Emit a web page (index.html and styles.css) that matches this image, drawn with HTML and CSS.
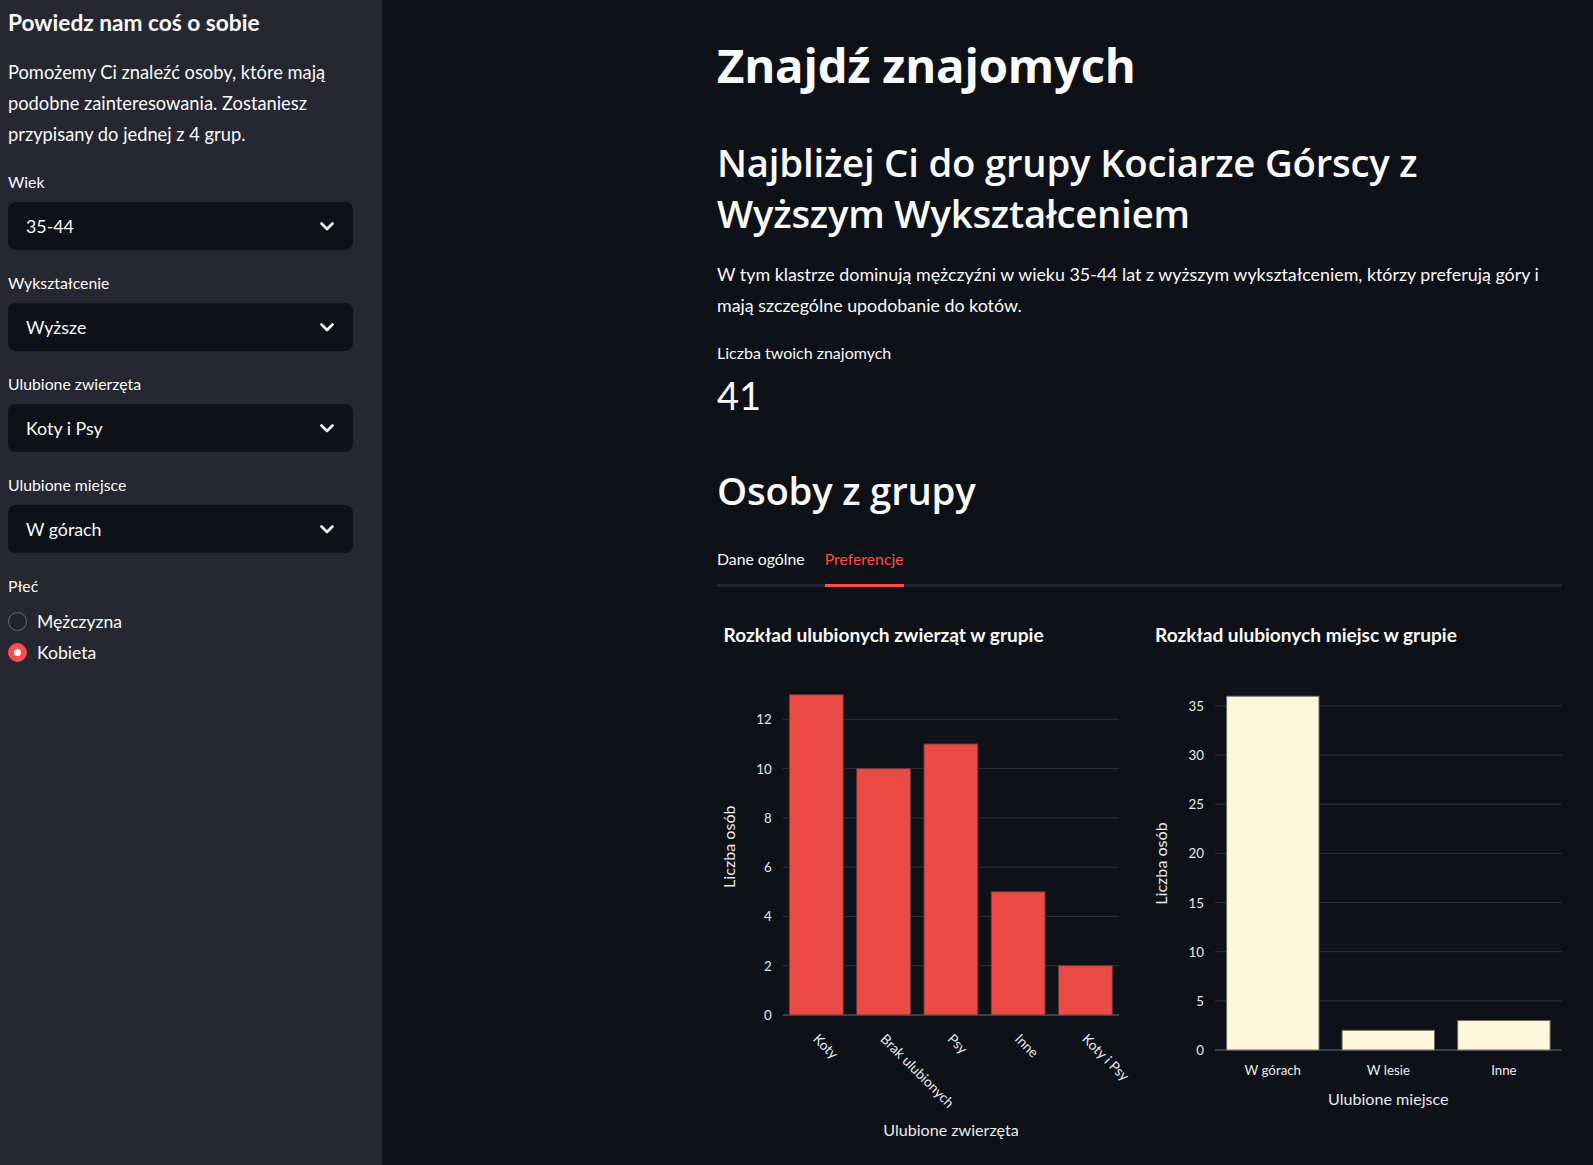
FILE: index.html
```html
<!DOCTYPE html>
<html lang="pl">
<head>
<meta charset="utf-8">
<title>Znajdź znajomych</title>
<link rel="stylesheet" href="styles.css">
</head>
<body>
<div class="app">
  <aside class="sidebar">
    <h2 class="side-title">Powiedz nam coś o sobie</h2>
    <p class="side-text">Pomożemy Ci znaleźć osoby, które mają podobne zainteresowania. Zostaniesz przypisany do jednej z 4 grup.</p>

    <div class="field">
      <div class="label">Wiek</div>
      <div class="select"><span>35-44</span><svg class="chev" width="14" height="9" viewBox="0 0 14 9"><polyline points="1.5,1.5 7,7 12.5,1.5" fill="none" stroke="#fafafa" stroke-width="2.6" stroke-linecap="round" stroke-linejoin="round"/></svg></div>
    </div>
    <div class="field">
      <div class="label">Wykształcenie</div>
      <div class="select"><span>Wyższe</span><svg class="chev" width="14" height="9" viewBox="0 0 14 9"><polyline points="1.5,1.5 7,7 12.5,1.5" fill="none" stroke="#fafafa" stroke-width="2.6" stroke-linecap="round" stroke-linejoin="round"/></svg></div>
    </div>
    <div class="field">
      <div class="label">Ulubione zwierzęta</div>
      <div class="select"><span>Koty i Psy</span><svg class="chev" width="14" height="9" viewBox="0 0 14 9"><polyline points="1.5,1.5 7,7 12.5,1.5" fill="none" stroke="#fafafa" stroke-width="2.6" stroke-linecap="round" stroke-linejoin="round"/></svg></div>
    </div>
    <div class="field">
      <div class="label">Ulubione miejsce</div>
      <div class="select"><span>W górach</span><svg class="chev" width="14" height="9" viewBox="0 0 14 9"><polyline points="1.5,1.5 7,7 12.5,1.5" fill="none" stroke="#fafafa" stroke-width="2.6" stroke-linecap="round" stroke-linejoin="round"/></svg></div>
    </div>
    <div class="field">
      <div class="label">Płeć</div>
      <div class="radios">
        <div class="radio"><span class="dot"></span><span>Mężczyzna</span></div>
        <div class="radio"><span class="dot on"></span><span>Kobieta</span></div>
      </div>
    </div>
  </aside>

  <main class="main">
    <h1 class="h1">Znajdź znajomych</h1>
    <h2 class="h2 group-title">Najbliżej Ci do grupy Kociarze Górscy z Wyższym Wykształceniem</h2>
    <p class="desc">W tym klastrze dominują mężczyźni w wieku 35-44 lat z wyższym wykształceniem, którzy preferują góry i mają szczególne upodobanie do kotów.</p>
    <div class="metric">
      <div class="metric-label">Liczba twoich znajomych</div>
      <div class="metric-value">41</div>
    </div>
    <h2 class="h2 people-title">Osoby z grupy</h2>
    <div class="tabs">
      <div class="tab">Dane ogólne</div>
      <div class="tab active">Preferencje</div>
    </div>
    <div class="charts">
      <div class="chart">
        <svg width="413" height="545" viewBox="0 0 413 545">
          <text class="ct" x="6.6" y="37">Rozkład ulubionych zwierząt w grupie</text>
          <g class="grid">
            <line x1="65.7" x2="402" y1="360.7" y2="360.7"/>
            <line x1="65.7" x2="402" y1="311.4" y2="311.4"/>
            <line x1="65.7" x2="402" y1="262.2" y2="262.2"/>
            <line x1="65.7" x2="402" y1="212.9" y2="212.9"/>
            <line x1="65.7" x2="402" y1="163.6" y2="163.6"/>
            <line x1="65.7" x2="402" y1="114.3" y2="114.3"/>
          </g>
          <line class="zero" x1="65.7" x2="402" y1="410" y2="410"/>
          <g class="bars-red">
            <rect x="72.4" y="89.7" width="53.8" height="320.3"/>
            <rect x="139.7" y="163.6" width="53.8" height="246.4"/>
            <rect x="207" y="139" width="53.8" height="271"/>
            <rect x="274.2" y="286.8" width="53.8" height="123.2"/>
            <rect x="341.5" y="360.7" width="53.8" height="49.3"/>
          </g>
          <g class="yt">
            <text x="54.7" y="415">0</text>
            <text x="54.7" y="365.7">2</text>
            <text x="54.7" y="316.4">4</text>
            <text x="54.7" y="267.2">6</text>
            <text x="54.7" y="217.9">8</text>
            <text x="54.7" y="168.6">10</text>
            <text x="54.7" y="119.3">12</text>
          </g>
          <g class="xt">
            <text transform="translate(98,432) rotate(45)" y="4">Koty</text>
            <text transform="translate(165.3,432) rotate(45)" y="4">Brak ulubionych</text>
            <text transform="translate(232.5,432) rotate(45)" y="4">Psy</text>
            <text transform="translate(299.8,432) rotate(45)" y="4">Inne</text>
            <text transform="translate(367,432) rotate(45)" y="4">Koty i Psy</text>
          </g>
          <text class="at" transform="translate(17.5,241.7) rotate(-90)">Liczba osób</text>
          <text class="at" x="234" y="531">Ulubione zwierzęta</text>
        </svg>
      </div>
      <div class="chart">
        <svg width="414" height="545" viewBox="0 0 414 545">
          <text class="ct" x="7" y="37">Rozkład ulubionych miejsc w grupie</text>
          <g class="grid">
            <line x1="67" x2="413.7" y1="395.9" y2="395.9"/>
            <line x1="67" x2="413.7" y1="346.7" y2="346.7"/>
            <line x1="67" x2="413.7" y1="297.6" y2="297.6"/>
            <line x1="67" x2="413.7" y1="248.4" y2="248.4"/>
            <line x1="67" x2="413.7" y1="199.3" y2="199.3"/>
            <line x1="67" x2="413.7" y1="150.1" y2="150.1"/>
            <line x1="67" x2="413.7" y1="101" y2="101"/>
          </g>
          <line class="zero" x1="67" x2="413.7" y1="445" y2="445"/>
          <g class="bars-cream">
            <rect x="78.6" y="91.2" width="92.4" height="353.8"/>
            <rect x="194.1" y="425.3" width="92.4" height="19.7"/>
            <rect x="309.7" y="415.5" width="92.4" height="29.5"/>
          </g>
          <g class="yt">
            <text x="56" y="450">0</text>
            <text x="56" y="400.9">5</text>
            <text x="56" y="351.7">10</text>
            <text x="56" y="302.6">15</text>
            <text x="56" y="253.4">20</text>
            <text x="56" y="204.3">25</text>
            <text x="56" y="155.1">30</text>
            <text x="56" y="106">35</text>
          </g>
          <g class="xl">
            <text x="124.8" y="470">W górach</text>
            <text x="240.4" y="470">W lesie</text>
            <text x="355.9" y="470">Inne</text>
          </g>
          <text class="at" transform="translate(18.5,258.5) rotate(-90)">Liczba osób</text>
          <text class="at" x="240.3" y="500">Ulubione miejsce</text>
        </svg>
      </div>
    </div>
  </main>
</div>
</body>
</html>
```
FILE: styles.css
```css
* { box-sizing: border-box; }
html, body {
  margin: 0;
  padding: 0;
  height: 100%;
  background: #0e1117;
  color: #fafafa;
  font-family: Lato, "Noto Sans", "Liberation Sans", sans-serif;
  overflow: hidden;
}
.app {
  display: flex;
  height: 1165px;
}
.sidebar {
  width: 382px;
  flex: 0 0 382px;
  background: #262730;
  padding: 9px 29px 0 8px;
}
.side-title {
  margin: 0;
  font-size: 22.7px;
  line-height: 27px;
  font-weight: 700;
}
.side-text {
  margin: 21px 0 0 0;
  font-size: 18.3px;
  line-height: 31px;
}
.field {
  margin-top: 23px;
}
.side-text + .field { margin-top: 22px; }
.label {
  font-size: 15.8px;
  line-height: 20px;
  height: 20px;
}
.select {
  margin-top: 10px;
  height: 48px;
  background: #0e1117;
  border-radius: 8px;
  display: flex;
  align-items: center;
  justify-content: space-between;
  padding: 0 19px 0 18px;
  font-size: 17.8px;
}
.chev { display: block; }
.radios {
  margin-top: 10px;
  display: flex;
  flex-direction: column;
}
.radio {
  height: 31px;
  display: flex;
  align-items: center;
  gap: 10px;
  font-size: 17.6px;
}
.dot {
  width: 19px;
  height: 19px;
  border-radius: 50%;
  border: 1px solid #6a6b73;
  background: #22232b;
  display: flex;
  align-items: center;
  justify-content: center;
}
.dot.on {
  background: #ff4b4b;
  border-color: #ff4b4b;
}
.dot.on::after {
  content: "";
  width: 7px;
  height: 7px;
  border-radius: 50%;
  background: #fff;
}

.main {
  flex: 1;
  padding: 0 31px 0 335px;
}
.h1 {
  margin: 37px 0 0 0;
  font-family: "Open Sans", Lato, sans-serif;
  font-size: 47.3px;
  line-height: 56px;
  font-weight: 700;
  letter-spacing: -0.2px;
}
.h2 {
  margin: 0;
  font-family: "Open Sans", Lato, sans-serif;
  font-size: 38.3px;
  line-height: 51px;
  font-weight: 600;
  letter-spacing: -0.2px;
}
.group-title { margin-top: 44px; }
.desc {
  margin: 19.5px 0 0 0;
  font-size: 17.85px;
  line-height: 31px;
}
.metric { margin-top: 22px; }
.metric-label {
  font-size: 16px;
  line-height: 20px;
}
.metric-value {
  margin-top: 7.5px;
  font-size: 38px;
  line-height: 50px;
}
.people-title { margin-top: 44.5px; }
.tabs {
  margin-top: 31.5px;
  display: flex;
  gap: 20px;
  border-bottom: 3px solid #262730;
}
.tab {
  font-size: 15.8px;
  line-height: 24px;
  padding-bottom: 12.5px;
  border-bottom: 3px solid transparent;
  margin-bottom: -3px;
}
.tab.active {
  color: #ff4b4b;
  border-bottom-color: #ff4b4b;
}
.charts {
  margin-top: 18px;
  display: flex;
  gap: 18px;
}
.chart svg { display: block; overflow: visible; }
.ct {
  font-size: 19.1px;
  font-weight: 700;
  fill: #fafafa;
}
.grid line { stroke: #31333c; stroke-width: 1; }
.zero { stroke: #3d3f48; stroke-width: 2; }
.bars-red rect { fill: #eb4b44; stroke: #6a3a3a; stroke-width: 1; }
.bars-cream rect { fill: #fff8dc; stroke: #6e6c66; stroke-width: 1; }
.yt text {
  font-size: 13.3px;
  fill: #e8eaf0;
  text-anchor: end;
}
.xt text {
  font-size: 13.8px;
  fill: #e8eaf0;
}
.xl text {
  font-size: 13.3px;
  fill: #e8eaf0;
  text-anchor: middle;
}
.at {
  font-size: 16.1px;
  fill: #e8eaf0;
  text-anchor: middle;
}
```
